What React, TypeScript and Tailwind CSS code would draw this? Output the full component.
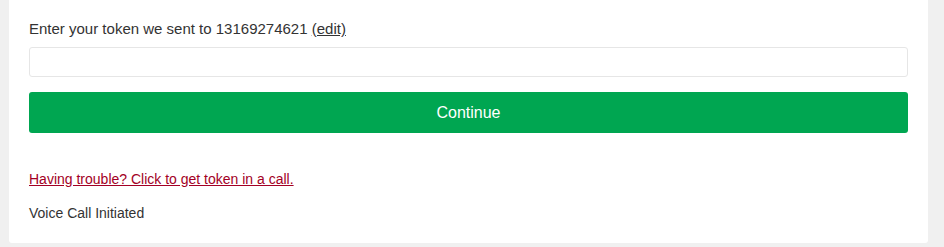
import React from "react";

export default function App() {
  return (
    <div className="w-[944px] h-[247px] bg-[#f0f0f0] overflow-hidden" style={{ fontFamily: '"Liberation Sans", Arial, sans-serif' }}>
      <div className="ml-[9px] w-[919px] h-[243px] bg-white rounded-b-[3px] px-5 pt-[19px] pb-5 flex flex-col">
        <p className="text-[15px] leading-[20px] text-[#333]">
          Enter your token we sent to 13169274621{" "}
          <a href="#" className="underline text-[#333]">(edit)</a>
        </p>
        <input
          type="text"
          className="mt-[8px] h-[30px] w-full border border-[#e6e6e6] rounded-[3px] bg-white outline-none px-2"
        />
        <button className="mt-[15px] h-[41px] w-full bg-[#00a651] rounded-[3px] text-white text-[16px] leading-[20px]">
          Continue
        </button>
        <a href="#" className="mt-[36px] text-[14px] leading-[20px] text-[#a30025] underline">
          Having trouble? Click to get token in a call.
        </a>
        <p className="mt-[14px] text-[14px] leading-[20px] text-[#333]">Voice Call Initiated</p>
      </div>
    </div>
  );
}
